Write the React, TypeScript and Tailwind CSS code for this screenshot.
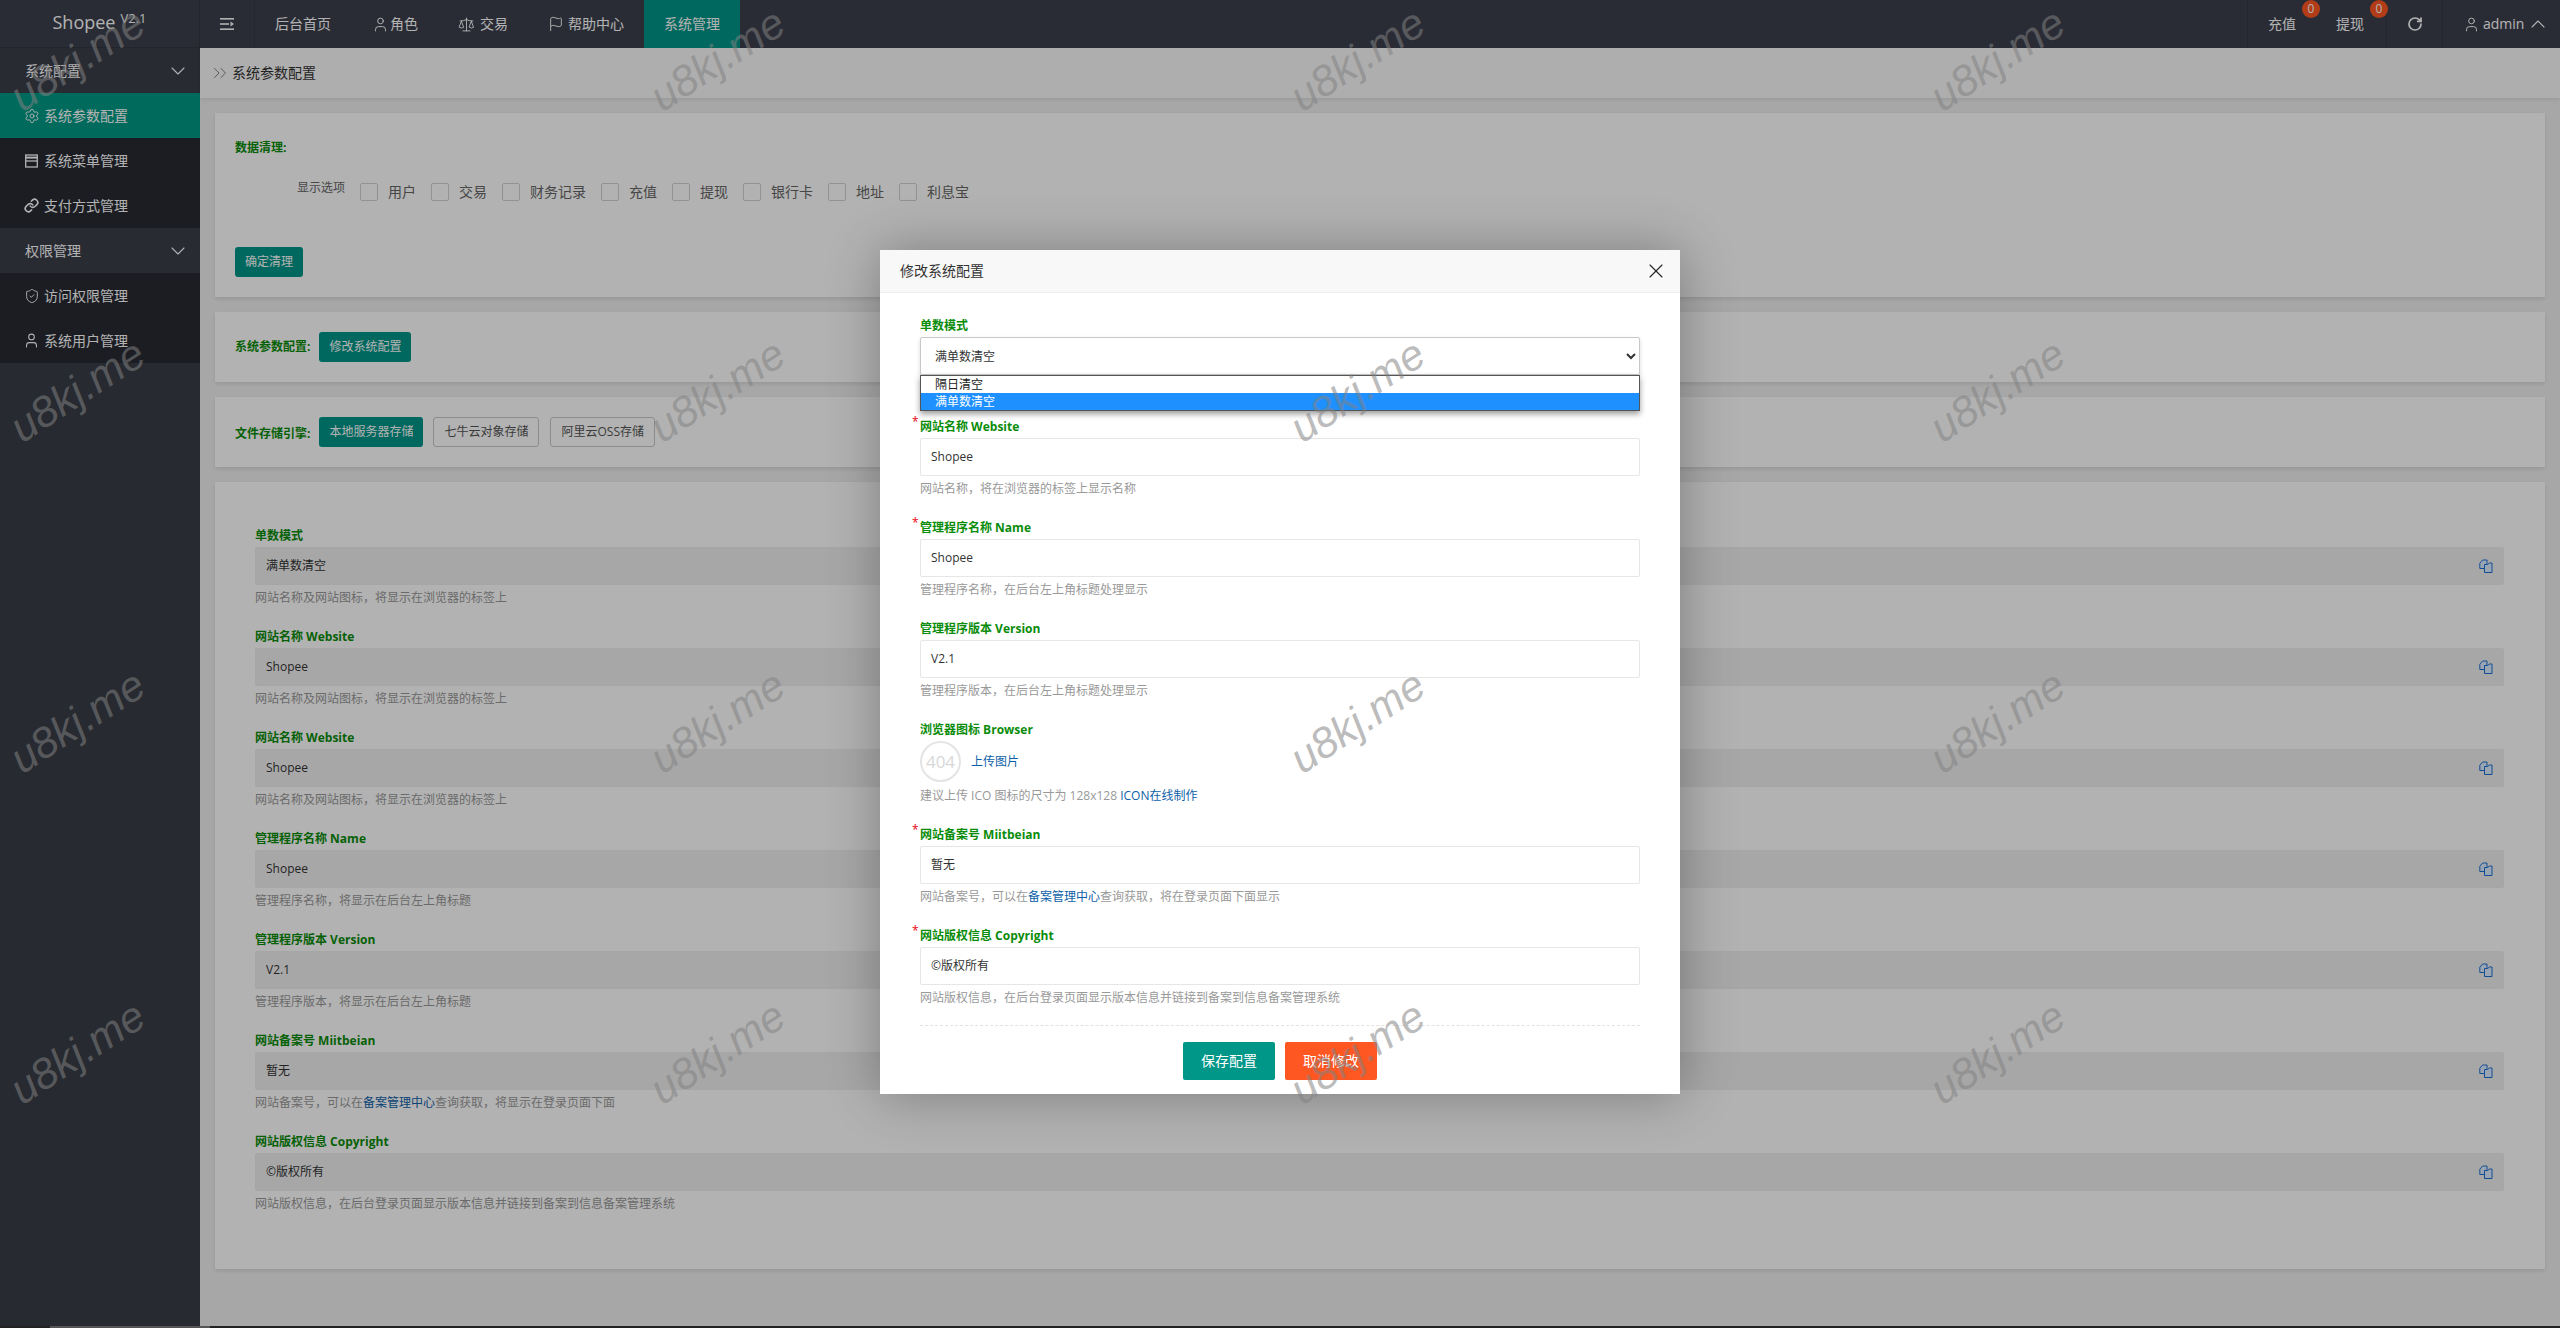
import type { ReactNode } from "react";
import {
  ChevronDown,
  ChevronUp,
  ChevronsRight,
  Flag,
  Link,
  RotateCw,
  Scale,
  Settings,
  ShieldCheck,
  User,
  X,
} from "lucide-react";

type Field = { label: string; value: string; hint: ReactNode };

const Blue = ({ children }: { children: ReactNode }) => <span className="text-[#0f5fa8]">{children}</span>;

const siteHint = "网站名称及网站图标，将显示在浏览器的标签上";

const configFields: Field[] = [
  { label: "单数模式", value: "满单数清空", hint: siteHint },
  { label: "网站名称 Website", value: "Shopee", hint: siteHint },
  { label: "网站名称 Website", value: "Shopee", hint: siteHint },
  { label: "管理程序名称 Name", value: "Shopee", hint: "管理程序名称，将显示在后台左上角标题" },
  { label: "管理程序版本 Version", value: "V2.1", hint: "管理程序版本，将显示在后台左上角标题" },
  {
    label: "网站备案号 Miitbeian",
    value: "暂无",
    hint: (
      <>
        网站备案号，可以在<Blue>备案管理中心</Blue>查询获取，将显示在登录页面下面
      </>
    ),
  },
  {
    label: "网站版权信息 Copyright",
    value: "©版权所有",
    hint: "网站版权信息，在后台登录页面显示版本信息并链接到备案到信息备案管理系统",
  },
];

const cleanOptions = ["用户", "交易", "财务记录", "充值", "提现", "银行卡", "地址", "利息宝"];

const MenuGlyph = () => (
  <svg width="14" height="14" viewBox="0 0 14 14" fill="currentColor">
    <rect x="0" y="1" width="14" height="1.6" />
    <rect x="0" y="6.2" width="9" height="1.6" />
    <path d="M10.5 4.6 14 7l-3.5 2.4z" />
    <rect x="0" y="11.4" width="14" height="1.6" />
  </svg>
);

const PanelGlyph = () => (
  <svg width="13" height="14" viewBox="0 0 13 14" fill="none" stroke="currentColor" strokeWidth="1.3">
    <rect x="0.7" y="1" width="11.6" height="12" />
    <path d="M0.7 3.6h11.6" strokeWidth="2" />
    <path d="M0.7 7h11.6" />
  </svg>
);

const CopyGlyph = () => (
  <svg width="14" height="14" viewBox="0 0 14 14" fill="#dcecff" stroke="#1a6fd0" strokeWidth="1">
    <path d="M0.8 4.2 3.6 1H8v8.5H0.8z" />
    <path d="M5.5 5.5h3l2-1.5H13v9.5H5.5z" />
  </svg>
);

// icon box a bit narrower than the glyph, so the text stays where it should
const IconSlot = ({ children }: { children: ReactNode }) => (
  <span className="flex w-[14px] justify-center">{children}</span>
);

const SideGroup = ({ title }: { title: string }) => (
  <div className="flex h-[45px] items-center justify-between bg-[#3b3e4a] pl-[25px] pr-[10px] text-sm text-white">
    <span>{title}</span>
    <ChevronDown size={24} strokeWidth={1.1} />
  </div>
);

const SideItem = ({ icon, title, active }: { icon: ReactNode; title: string; active?: boolean }) => (
  <div
    className={
      active
        ? "flex h-[45px] items-center gap-[6px] bg-[#009a85] pl-[25px] text-sm text-white"
        : "flex h-[45px] items-center gap-[6px] bg-[#272a33] pl-[25px] text-sm text-white"
    }
  >
    <span className="flex w-[13px] justify-center">{icon}</span>
    <span>{title}</span>
  </div>
);

const NavItem = ({ icon, title, active }: { icon?: ReactNode; title: string; active?: boolean }) => (
  <div
    className={
      active
        ? "flex h-full items-center gap-[3px] bg-[#009688] px-5 text-sm text-white"
        : "flex h-full items-center gap-[3px] px-5 text-sm text-white"
    }
  >
    {icon}
    <span>{title}</span>
  </div>
);

const Badge = () => (
  <span className="absolute left-[54px] top-0 flex h-[18px] w-[18px] items-center justify-center rounded-full bg-[#ff5722] text-xs text-white">
    0
  </span>
);

const TextBtn = ({ children, outline }: { children: ReactNode; outline?: boolean }) => (
  <button
    type="button"
    className={
      outline
        ? "h-[30px] rounded-[3px] border border-[#c9c9c9] bg-white px-[10px] text-xs text-[#555]"
        : "h-[30px] rounded-[3px] bg-[#009688] px-[10px] text-xs text-white"
    }
  >
    {children}
  </button>
);

const GreenLabel = ({ children }: { children: ReactNode }) => (
  <span className="text-xs font-bold text-[#0a8c0a]">{children}</span>
);

const ConfigRow = ({ field }: { field: Field }) => (
  <div className="mb-[15px]">
    <div className="flex h-[22px] items-center text-xs font-bold text-[#0a8c0a]">{field.label}</div>
    <div className="flex h-[38px] items-center justify-between rounded-[2px] border border-[#eeeeee] bg-[#f0f0f0] pl-[10px] pr-[10px] text-xs text-[#333]">
      <span>{field.value}</span>
      <CopyGlyph />
    </div>
    <div className="flex h-[26px] items-center text-xs text-[#999]">{field.hint}</div>
  </div>
);

const ModalLabel = ({ children, required }: { children: ReactNode; required?: boolean }) => (
  <div className="relative flex h-[22px] items-center text-xs font-bold text-[#0a8c0a]">
    {required && <span className="absolute left-[-8px] top-[-2px] text-xs font-normal text-red-600">*</span>}
    {children}
  </div>
);

const ModalInput = ({ label, value, hint }: { label: string; value: string; hint: ReactNode }) => (
  <div className="mb-[15px]">
    <ModalLabel required={label !== "管理程序版本 Version"}>{label}</ModalLabel>
    <div className="flex h-[38px] items-center rounded-[2px] border border-[#e6e6e6] bg-white pl-[10px] text-xs text-[#333]">
      {value}
    </div>
    <div className="flex h-[26px] items-center text-xs text-[#999]">{hint}</div>
  </div>
);

const Watermarks = () => (
  <div className="pointer-events-none absolute left-[-243px] top-[-106px] grid grid-cols-[repeat(5,640px)] grid-rows-[repeat(5,331px)]">
    {Array.from({ length: 25 }).map((_, i) => (
      <div key={i} className="flex items-center justify-center">
        <span className="-rotate-[33deg] font-['Liberation_Sans',sans-serif] text-[43px] italic text-[rgba(130,130,130,0.55)]">
          u8kj.me
        </span>
      </div>
    ))}
  </div>
);

const ConfigModal = () => (
  <div className="absolute inset-0 flex justify-center pt-[250px]">
    <div className="h-[844px] w-[800px] bg-white shadow-[1px_1px_50px_rgba(0,0,0,0.3)]">
      <div className="flex h-[43px] items-center justify-between border-b border-[#eeeeee] bg-[#f8f8f8] pl-5 pr-3 text-sm text-[#333]">
        <span>修改系统配置</span>
        <X size={24} strokeWidth={1.1} className="text-[#222]" />
      </div>
      <div className="px-10 pt-[22px]">
        <div className="relative mb-[41px]">
          <ModalLabel>单数模式</ModalLabel>
          <select
            defaultValue="full"
            className="h-[38px] w-full rounded-[2px] border border-[#c8c8c8] bg-white pl-[10px] text-xs text-[#333] shadow-[0_2px_4px_rgba(0,0,0,0.15)]"
          >
            <option value="day">隔日清空</option>
            <option value="full">满单数清空</option>
          </select>
          <div className="absolute left-0 right-0 top-[60px] border border-[#555] bg-white text-xs shadow-[0_3px_6px_rgba(0,0,0,0.4)]">
            <div className="flex h-[17px] items-center pl-[14px] text-[#222]">隔日清空</div>
            <div className="flex h-[17px] items-center bg-[#1e90ff] pl-[14px] text-white">满单数清空</div>
          </div>
        </div>
        <ModalInput label="网站名称 Website" value="Shopee" hint="网站名称，将在浏览器的标签上显示名称" />
        <ModalInput label="管理程序名称 Name" value="Shopee" hint="管理程序名称，在后台左上角标题处理显示" />
        <ModalInput label="管理程序版本 Version" value="V2.1" hint="管理程序版本，在后台左上角标题处理显示" />
        <div className="mb-[15px]">
          <ModalLabel>浏览器图标 Browser</ModalLabel>
          <div className="flex h-[41px] items-center gap-[10px]">
            <div className="flex h-[41px] w-[41px] items-center justify-center rounded-full border-2 border-[#e4e4e4] text-[17px] text-[#d8d8d8]">
              404
            </div>
            <span className="text-xs text-[#0f5fa8]">上传图片</span>
          </div>
          <div className="flex h-[27px] items-center text-xs text-[#999]">
            建议上传 ICO 图标的尺寸为 128x128&nbsp;<Blue>ICON在线制作</Blue>
          </div>
        </div>
        <ModalInput
          label="网站备案号 Miitbeian"
          value="暂无"
          hint={
            <>
              网站备案号，可以在<Blue>备案管理中心</Blue>查询获取，将在登录页面下面显示
            </>
          }
        />
        <ModalInput
          label="网站版权信息 Copyright"
          value="©版权所有"
          hint="网站版权信息，在后台登录页面显示版本信息并链接到备案到信息备案管理系统"
        />
        <div className="-mt-px border-t border-dashed border-[#e2e2e2]" />
        <div className="flex justify-center gap-[10px] pt-4">
          <button type="button" className="h-[38px] w-[92px] rounded-[2px] bg-[#009688] text-sm text-white">
            保存配置
          </button>
          <button type="button" className="h-[38px] w-[92px] rounded-[2px] bg-[#ff5722] text-sm text-white">
            取消修改
          </button>
        </div>
      </div>
    </div>
  </div>
);

export default function App() {
  return (
    <div className="relative flex h-[1328px] w-full overflow-hidden bg-[#f0f0f0] font-['Open_Sans','Noto_Sans_CJK_SC',sans-serif]">
      <aside className="flex w-[200px] shrink-0 flex-col bg-[#393d45]">
        <div className="flex h-12 items-start justify-center gap-[5px] border-b border-r border-[#33363f] bg-[#3c3f4c] pt-[10px] text-white">
          <span className="text-lg leading-6">Shopee</span>
          <span className="text-[13px] leading-4">V2.1</span>
        </div>
        <SideGroup title="系统配置" />
        <SideItem active icon={<Settings size={16} strokeWidth={1.4} className="shrink-0" />} title="系统参数配置" />
        <SideItem icon={<PanelGlyph />} title="系统菜单管理" />
        <SideItem icon={<Link size={15} strokeWidth={2.6} className="shrink-0" />} title="支付方式管理" />
        <SideGroup title="权限管理" />
        <SideItem icon={<ShieldCheck size={16} strokeWidth={1.4} className="shrink-0" />} title="访问权限管理" />
        <SideItem icon={<User size={17} strokeWidth={1.5} className="shrink-0" />} title="系统用户管理" />
      </aside>

      <div className="flex min-w-0 flex-1 flex-col">
        <header className="flex h-12 shrink-0 items-center bg-[#3d404d] text-white">
          <div className="flex h-full w-[55px] items-center justify-center border-r border-[#363944]">
            <MenuGlyph />
          </div>
          <div className="mr-[2px] h-full">
            <NavItem title="后台首页" />
          </div>
          <NavItem
            icon={
              <IconSlot>
                <User size={17} strokeWidth={1.4} className="shrink-0" />
              </IconSlot>
            }
            title="角色"
          />
          <NavItem
            icon={
              <span className="mr-[2px]">
                <Scale size={17} strokeWidth={1.3} />
              </span>
            }
            title="交易"
          />
          <NavItem
            icon={
              <span className="mr-[1px]">
                <Flag size={16} strokeWidth={1.4} />
              </span>
            }
            title="帮助中心"
          />
          <NavItem active title="系统管理" />
          <div className="ml-auto flex h-full items-center text-sm">
            <div className="relative flex h-full w-[69px] items-center border-l border-[#363944] pl-5">
              充值
              <Badge />
            </div>
            <div className="relative flex h-full w-[70px] items-center pl-5">
              提现
              <Badge />
            </div>
            <div className="flex h-full w-[56px] items-center justify-center border-l border-[#363944]">
              <RotateCw size={16} strokeWidth={2.6} />
            </div>
            <div className="flex h-full w-[118px] items-center gap-[5px] border-l border-[#363944] pl-[21px]">
              <IconSlot>
                <User size={17} strokeWidth={1.4} className="shrink-0" />
              </IconSlot>
              <span>admin</span>
              <span className="-ml-[3px]">
                <ChevronUp size={24} strokeWidth={1.1} />
              </span>
            </div>
          </div>
        </header>

        <div className="flex h-[50px] shrink-0 items-center gap-px bg-[#fafafa] pl-[9px] text-sm text-[#333] shadow-[0_2px_4px_rgba(0,0,0,0.08)]">
          <ChevronsRight size={22} strokeWidth={1} className="text-[#777]" />
          <span>系统参数配置</span>
        </div>

        <main className="flex flex-1 flex-col gap-[15px] pl-[15px] pr-[15px] pt-[15px]">
          <section className="h-[184px] bg-white px-5 shadow-[0_2px_4px_rgba(0,0,0,0.1)]">
            <div className="flex h-[70px] items-center">
              <GreenLabel>数据清理:</GreenLabel>
            </div>
            <div className="flex h-[34px] items-start">
              <span className="ml-[62px] mr-[15px] mt-[-3px] text-xs leading-[16px] text-[#666]">显示选项</span>
              <div className="flex items-center gap-[15px]">
                {cleanOptions.map((opt) => (
                  <label key={opt} className="flex items-center gap-[10px] text-sm leading-[18px] text-[#666]">
                    <span className="h-[18px] w-[18px] rounded-[2px] border border-[#d2d2d2] bg-white" />
                    {opt}
                  </label>
                ))}
              </div>
            </div>
            <div className="pt-[30px]">
              <TextBtn>确定清理</TextBtn>
            </div>
          </section>

          <section className="flex h-[70px] items-center gap-[9px] bg-white px-5 shadow-[0_2px_4px_rgba(0,0,0,0.1)]">
            <GreenLabel>系统参数配置:</GreenLabel>
            <TextBtn>修改系统配置</TextBtn>
          </section>

          <section className="flex h-[70px] items-center gap-[10px] bg-white px-5 shadow-[0_2px_4px_rgba(0,0,0,0.1)]">
            <span className="mr-[-1px]">
              <GreenLabel>文件存储引擎:</GreenLabel>
            </span>
            <TextBtn>本地服务器存储</TextBtn>
            <TextBtn outline>七牛云对象存储</TextBtn>
            <span className="ml-[1px]">
              <TextBtn outline>阿里云OSS存储</TextBtn>
            </span>
          </section>

          <section className="bg-white pb-[37px] pl-10 pr-[41px] pt-[43px] shadow-[0_2px_4px_rgba(0,0,0,0.1)]">
            {configFields.map((field, i) => (
              <ConfigRow key={i} field={field} />
            ))}
          </section>
        </main>
      </div>

      <div className="absolute inset-0 bg-black/30" />
      <ConfigModal />
      <Watermarks />
      <div className="absolute inset-x-0 bottom-0 h-[2px] bg-[#222]">
        <div className="ml-[50px] h-full w-[160px] bg-[#555]" />
      </div>
    </div>
  );
}
